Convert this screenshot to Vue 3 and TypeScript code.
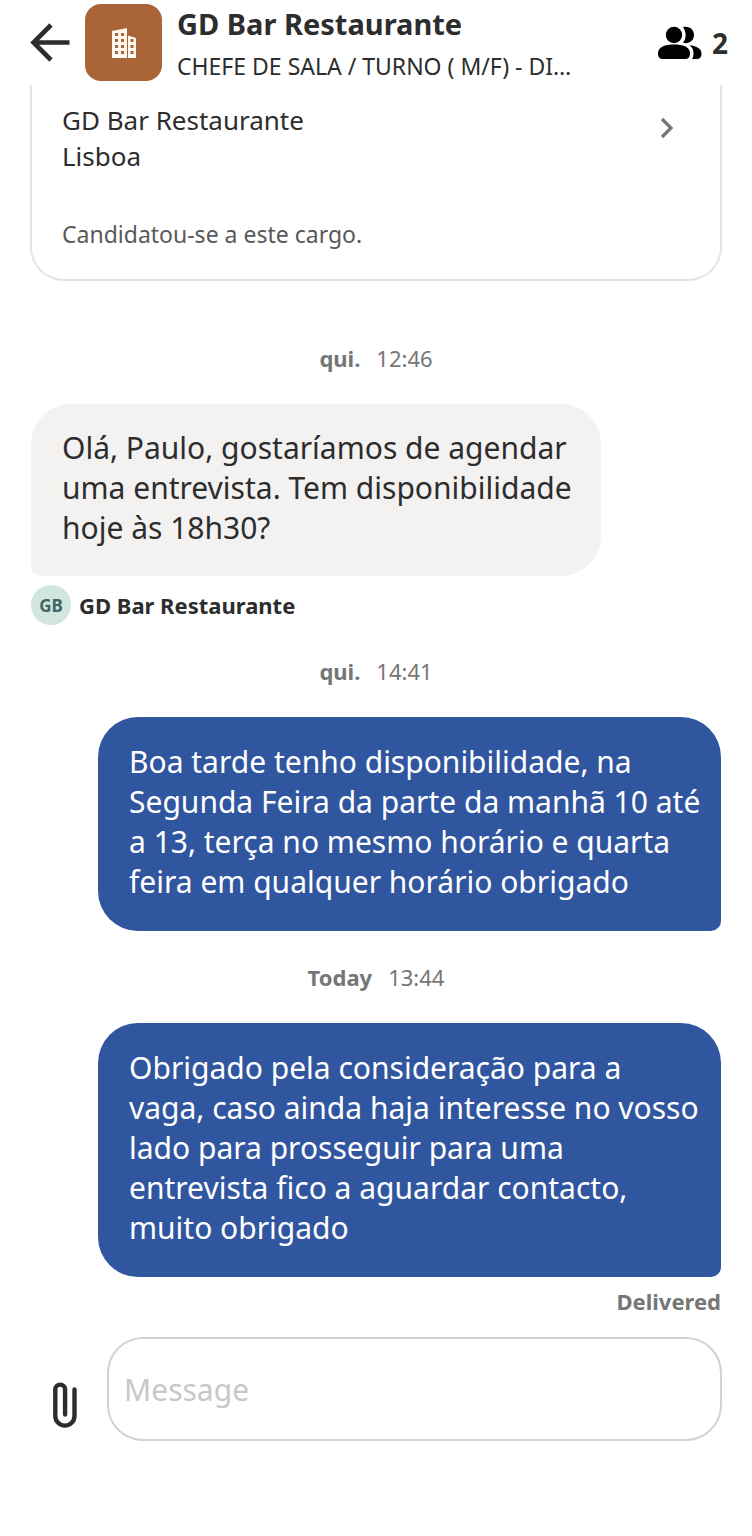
<script setup lang="ts">
import { ref } from 'vue'

interface Message {
  id: number
  day: string
  time: string
  mine: boolean
  text: string
  sender?: string
  initials?: string
  status?: string
}

const messages: Message[] = [
  {
    id: 1,
    day: 'qui.',
    time: '12:46',
    mine: false,
    text: 'Olá, Paulo, gostaríamos de agendar\numa entrevista. Tem disponibilidade\nhoje às 18h30?',
    sender: 'GD Bar Restaurante',
    initials: 'GB',
  },
  {
    id: 2,
    day: 'qui.',
    time: '14:41',
    mine: true,
    text: 'Boa tarde tenho disponibilidade, na\nSegunda Feira da parte da manhã 10 até\na 13, terça no mesmo horário e quarta\nfeira em qualquer horário obrigado',
  },
  {
    id: 3,
    day: 'Today',
    time: '13:44',
    mine: true,
    text: 'Obrigado pela consideração para a\nvaga, caso ainda haja interesse no vosso\nlado para prosseguir para uma\nentrevista fico a aguardar contacto,\nmuito obrigado',
    status: 'Delivered',
  },
]

const draft = ref('')
</script>

<template>
  <div class="screen">
    <header class="header">
      <button class="icon-button back" type="button" aria-label="Back">
        <svg width="40" height="40" viewBox="0 0 40 40" fill="none" stroke="#2d2d2d" stroke-width="4.600">
          <path d="M39.500 19.500H4M21 2L3.500 19.500L21 37" />
        </svg>
      </button>
      <div class="logo">
        <svg width="26" height="32" viewBox="0 0 26 32" aria-hidden="true">
          <path fill="#fff8ef" fill-rule="evenodd" d="M1 4L16 1V31H1ZM4 6v3h3v-3ZM10 6v3h3v-3ZM4 12v3h3v-3ZM10 12v3h3v-3ZM4 18v3h3v-3ZM10 18v3h3v-3ZM4 24v3h3v-3ZM10 24v3h3v-3ZM17 8.500L25 11V31H17ZM19.500 12v3h3v-3ZM19.500 18v3h3v-3ZM19.500 24v3h3v-3Z" />
        </svg>
      </div>
      <div class="heading">
        <h1>GD Bar Restaurante</h1>
        <p>CHEFE DE SALA / TURNO ( M/F) - DI…</p>
      </div>
      <button class="icon-button people" type="button" aria-label="2 participants">
        <svg width="44" height="34" viewBox="0 0 44 34" fill="#000" aria-hidden="true">
          <circle cx="16" cy="9" r="8.200" />
          <path d="M0 27C0 21 7 18.500 16 18.500S32 21 32 27V28Q32 33 27 33H5Q0 33 0 28Z" />
          <path d="M25 1.200C31 -0.500 36 3.500 36 9S31 18.500 25 16.800C28.500 12.500 28.500 5.500 25 1.200Z" />
          <path d="M31.500 19.300C39 20 43.500 23 43.500 27.500V28Q43.500 33 38.500 33H34Q35.500 31 35.500 27.500C35.500 23.500 34 21.200 31.500 19.300Z" />
        </svg>
        <span>2</span>
      </button>
    </header>

    <main class="thread">
      <a class="job-card" href="#">
        <span class="job-place">GD Bar Restaurante<br />Lisboa</span>
        <svg class="chevron" width="14" height="22" viewBox="0 0 14 22" fill="none" stroke="#767676" stroke-width="3.200" aria-hidden="true">
          <path d="M2 2L11 11L2 20" />
        </svg>
        <span class="job-note">Candidatou-se a este cargo.</span>
      </a>

      <section v-for="m in messages" :key="m.id" class="entry" :class="{ mine: m.mine }">
        <p class="stamp"><strong>{{ m.day }}</strong><time>{{ m.time }}</time></p>
        <p class="bubble">{{ m.text }}</p>
        <div v-if="m.sender" class="sender">
          <span class="avatar">{{ m.initials }}</span>
          <strong>{{ m.sender }}</strong>
        </div>
        <p v-if="m.status" class="status">{{ m.status }}</p>
      </section>
    </main>

    <form class="composer" @submit.prevent>
      <button class="icon-button attach" type="button" aria-label="Attach file">
        <svg width="24" height="46" viewBox="0 0 24 46" fill="none" stroke="#2d2d2d" stroke-width="4.400" stroke-linecap="round" aria-hidden="true">
          <path d="M21.500 7.500V34A9.600 9.600 0 0 1 2.300 34V7.500A4.900 4.900 0 0 1 12.100 7.500V32.500" />
        </svg>
      </button>
      <input v-model="draft" type="text" placeholder="Message" aria-label="Message" />
    </form>
  </div>
</template>

<style>
body {
  margin: 0;
  background: #fff;
}
</style>

<style scoped>
.screen {
  min-height: 100vh;
  box-sizing: border-box;
  background: #fff;
  color: #2d2d2d;
  font-family: "Noto Sans", "Open Sans", sans-serif;
}

.screen p,
.screen h1 {
  margin: 0;
}

.icon-button {
  display: flex;
  align-items: center;
  padding: 0;
  border: 0;
  background: none;
  color: inherit;
  font: inherit;
}

.header {
  display: flex;
  align-items: center;
  height: 85px;
  padding: 0 24px 0 30px;
}

.logo {
  display: flex;
  flex: none;
  align-items: center;
  justify-content: center;
  width: 77px;
  height: 77px;
  margin: 0 15px 0 15px;
  border-radius: 16px;
  background: #a96437;
}

.heading {
  flex: 1;
  min-width: 0;
  padding-top: 4px;
}

.heading h1 {
  font-size: 29px;
  font-weight: 700;
  line-height: 42px;
}

.heading p {
  overflow: hidden;
  font-size: 23px;
  line-height: 42px;
  text-overflow: ellipsis;
  white-space: nowrap;
}

.people {
  gap: 10px;
  font-size: 28px;
  font-weight: 700;
}

.thread {
  padding: 0 31px;
}

.job-card {
  display: grid;
  grid-template-columns: 1fr auto;
  row-gap: 40px;
  margin: 0 -1px;
  padding: 17px 46px 25px 30px;
  border: 2px solid #e4e4e4;
  border-top: 0;
  border-radius: 0 0 34px 34px;
  color: inherit;
  text-decoration: none;
}

.job-place {
  font-size: 26px;
  line-height: 36px;
}

.chevron {
  margin-top: 15px;
}

.job-note {
  color: #595959;
  font-size: 23px;
  line-height: 40px;
}

.entry {
  display: flex;
  flex-direction: column;
  align-items: flex-start;
}

.stamp {
  display: flex;
  align-self: center;
  gap: 16px;
  padding: 29px 0;
  color: #767676;
  font-size: 22px;
  line-height: 34px;
}

.job-card + .entry .stamp {
  padding-top: 60px;
}

.bubble {
  width: 100%;
  max-width: 570px;
  box-sizing: border-box;
  padding: 24px 24px 28px 31px;
  border-radius: 40px 40px 40px 10px;
  background: #f3f2f1;
  font-size: 30px;
  line-height: 40px;
  white-space: pre-line;
}

.mine {
  align-items: flex-end;
}

.mine .bubble {
  max-width: 623px;
  padding: 25px 4px 29px 31px;
  border-radius: 40px 40px 10px 40px;
  background: #3156a0;
  color: #fff;
}

.sender {
  display: flex;
  align-items: center;
  gap: 8px;
  margin-top: 9px;
  font-size: 22px;
}

.avatar {
  display: flex;
  align-items: center;
  justify-content: center;
  width: 40px;
  height: 40px;
  border-radius: 50%;
  background: #d0e6df;
  color: #3f675d;
  font-size: 17px;
  font-weight: 700;
}

.status {
  color: #767676;
  font-size: 22px;
  font-weight: 700;
  line-height: 48px;
}

.composer {
  display: flex;
  align-items: center;
  padding: 12px 30px 0 53px;
}

.attach {
  margin: 32px 30px 0 0;
}

.composer input {
  flex: 1;
  min-width: 0;
  height: 104px;
  box-sizing: border-box;
  padding: 0 15px;
  border: 2px solid #d4d2d0;
  border-radius: 36px;
  background: #fff;
  color: #2d2d2d;
  font-family: inherit;
  font-size: 30px;
}

.composer input::placeholder {
  color: #c8c8c8;
  opacity: 1;
}
</style>
